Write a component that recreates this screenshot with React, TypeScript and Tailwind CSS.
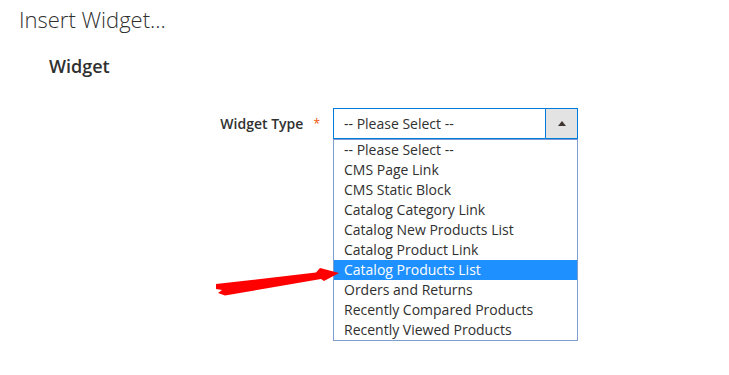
import React from "react";

const options = [
  "-- Please Select --",
  "CMS Page Link",
  "CMS Static Block",
  "Catalog Category Link",
  "Catalog New Products List",
  "Catalog Product Link",
  "Catalog Products List",
  "Orders and Returns",
  "Recently Compared Products",
  "Recently Viewed Products",
];

const selected = "Catalog Products List";

/* red annotation arrow drawn over the page */
const PointerArrow = () => (
  <svg
    className="absolute inset-0 pointer-events-none"
    width="729"
    height="375"
    viewBox="0 0 729 375"
  >
    <path
      fill="#ff0000"
      d="M216 284 L316 272.5 L320 268 L339 273 L324 281 L321 279 L225 295.5 L218 293 L222 290 L216 289 Z"
    />
  </svg>
);

const SelectBox = () => (
  <div className="w-[245px]">
    <div className="flex h-[31px] border border-[#007bdb] bg-white">
      <div className="flex-1 flex items-center pl-[10px] text-[14px] text-[#303030]">
        -- Please Select --
      </div>
      <div className="w-[32px] flex items-center justify-center bg-[#e3e3e3] border-l border-[#007bdb]">
        <svg width="8" height="5" viewBox="0 0 8 5">
          <path d="M4 0 L8 5 L0 5 Z" fill="#41362f" />
        </svg>
      </div>
    </div>
    <ul className="border border-[#7f9ccf] bg-white">
      {options.map((o) => (
        <li
          key={o}
          className={`h-[20px] leading-[20px] pl-[10px] text-[14px] ${
            o === selected ? "bg-[#1e90ff] text-white" : "text-[#303030]"
          }`}
        >
          {o}
        </li>
      ))}
    </ul>
  </div>
);

export default function App() {
  return (
    <div className="relative w-[729px] h-[375px] bg-white overflow-hidden font-['Open_Sans',sans-serif] text-[#303030]">
      <h1 className="pl-[19px] pt-[4px] text-[22px] leading-[30px] font-light">
        Insert Widget...
      </h1>
      <h2 className="pl-[49px] mt-[20px] text-[18px] leading-[24px] font-semibold">
        Widget
      </h2>

      <div className="flex items-start mt-[30px]">
        <div className="w-[320px] h-[31px] flex items-center justify-end">
          <span className="text-[14px] font-semibold">Widget Type</span>
          <span className="ml-[10px] text-[12px] text-[#eb5202]">*</span>
        </div>
        <div className="ml-[13px]">
          <SelectBox />
        </div>
      </div>

      <PointerArrow />
    </div>
  );
}
